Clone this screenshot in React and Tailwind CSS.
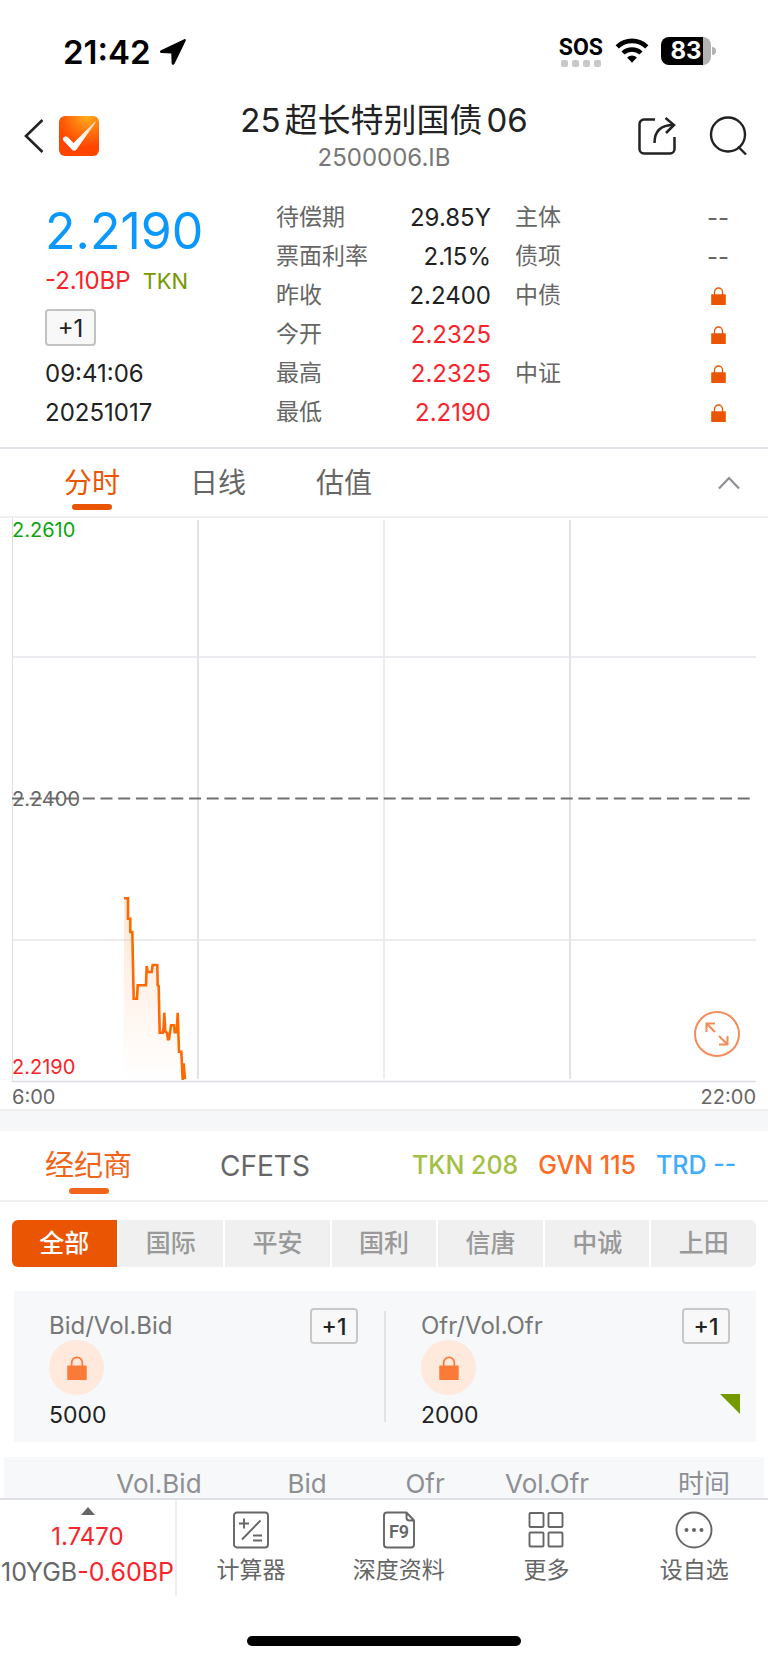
import { useState } from 'react';

const quoteRows = [
  { label: '待偿期', value: '29.85Y', side: '主体', locked: false },
  { label: '票面利率', value: '2.15%', side: '债项', locked: false },
  { label: '昨收', value: '2.2400', side: '中债', locked: true },
  { label: '今开', value: '2.2325', red: true, side: '', locked: true },
  { label: '最高', value: '2.2325', red: true, side: '中证', locked: true },
  { label: '最低', value: '2.2190', red: true, side: '', locked: true }
];

const chartTabs = ['分时', '日线', '估值'];
const brokers = ['全部', '国际', '平安', '国利', '信唐', '中诚', '上田'];

const linePath =
  'M112 380.3H116V400.7H118.3V414H120.3L121.7 480.7H125L125.7 467.3H134L134.7 448L135.7 454H139.7L140.7 447H145.3L145.7 467.3L146.7 468L147.7 514.7H150.7L151.7 508.7L152.3 494.7L153.3 513.7L155 514.7L156 521.3H157L159 507.3H162L162.7 514.3H164.7L165.7 494.7L167 533.7H169.3L170.7 562L171.7 545.3L173 561';

const LockIcon = ({ className }) => (
  <svg viewBox="0 0 15 18" className={className} fill="none" aria-hidden="true">
    <path d="M3.5 8V5a4 4 0 0 1 8 0v3" stroke="currentColor" strokeWidth="1.3" />
    <path d="M.8 7.2h13.4a.6.6 0 0 1 .6.6v9.600a.6.6 0 0 1-.6.6H.8a.6.6 0 0 1-.6-.6V7.800a.6.6 0 0 1 .6-.6z" fill="currentColor" />
  </svg>
);

const StatusBar = () => (
  <div className="flex items-start justify-between pt-9 pl-[63px] pr-[52px] h-[92px] text-black">
    <div className="flex items-center gap-2">
      <span className="text-[33px] leading-8 font-semibold">21:42</span>
      <svg width="28" height="28" viewBox="0 0 28 28" aria-hidden="true">
        <path d="M25.2 1.2 2 12.2c-1.6.8-1.2 2.8.6 2.9l9.7.3.3 9.8c.1 1.8 2.2 2.2 2.9.6L26.7 2.8c.5-1.2-.4-2.1-1.500-1.600z" />
      </svg>
    </div>
    <div className="flex items-start gap-3">
      <div className="flex flex-col items-center">
        <span className="text-[23px] leading-6 font-bold font-['Roboto',sans-serif]">SOS</span>
        <div className="flex gap-1 text-[#c8c8c8]">
          <i className="w-[7px] h-[7px] rounded-xs bg-current" />
          <i className="w-[7px] h-[7px] rounded-xs bg-current" />
          <i className="w-[7px] h-[7px] rounded-xs bg-current" />
          <i className="w-[7px] h-[7px] rounded-xs bg-current" />
        </div>
      </div>
      <svg width="34" height="28" viewBox="0 0 34 28" fill="none" aria-label="Wi-Fi">
        <path d="M2.2 10.8a21.5 21.5 0 0 1 29.600 0" stroke="currentColor" strokeWidth="4.6" />
        <path d="M8 17a13.2 13.2 0 0 1 18 0" stroke="currentColor" strokeWidth="4.4" />
        <path d="M17 26.8l-4.9-5.4a7.6 7.6 0 0 1 9.800 0z" fill="currentColor" />
      </svg>
      <div className="flex items-center pt-px">
        <div className="flex items-center justify-center w-[50px] h-7 rounded-lg bg-linear-to-r from-black from-84% to-[#b3b3b3] to-84% text-white text-2xl font-bold">83</div>
        <i className="w-1 h-2 ml-px rounded-r-full bg-[#b3b3b3]" />
      </div>
    </div>
  </div>
);

const Header = () => (
  <header className="relative flex items-center justify-between h-[92px] px-5">
    <div className="flex items-center gap-[11px] pb-1">
      <button type="button" aria-label="返回">
        <svg width="28" height="40" viewBox="0 0 28 40" fill="none" stroke="#222" strokeWidth="2.6">
          <path d="M22.5 4 6 20l16.5 16" />
        </svg>
      </button>
      <svg width="40" height="40" viewBox="0 0 40 40" aria-hidden="true">
        <defs>
          <radialGradient id="logo" cx="0.7" cy="0" r="0.8">
            <stop offset="0" stopColor="#ffb01c" />
            <stop offset="0.6" stopColor="#ff6a0c" />
            <stop offset="1" stopColor="#ff4400" />
          </radialGradient>
          <linearGradient id="tick" x1="0" y1="1" x2="1" y2="0">
            <stop offset="0.4" stopColor="#fff" />
            <stop offset="1" stopColor="#ffd9b8" />
          </linearGradient>
        </defs>
        <rect width="40" height="40" rx="6" fill="url(#logo)" />
        <path d="M4 22c.6-1.5 3.8-2.3 5.2-.6l5.3 5.6L35.5 6c.7-.6 1.3-.1.9.7L17.5 33.5c-1 1.5-3.2 1.6-4.4.2L4.6 24.8c-.7-.8-1-1.8-.6-2.8z" fill="url(#tick)" />
      </svg>
    </div>
    <div className="absolute inset-x-32 top-2 text-center">
      <h1 className="flex justify-center gap-1 text-[33px] leading-10 text-[#222]">
        <span>25</span>
        <span>超长特别国债</span>
        <span>06</span>
      </h1>
      <p className="mt-1 text-[24px] leading-7 text-[#777]">2500006.IB</p>
    </div>
    <div className="flex items-center gap-[30px] pb-1">
      <button type="button" aria-label="分享">
        <svg width="42" height="42" viewBox="0 0 42 42" fill="none" stroke="#222" strokeWidth="2.5">
          <path d="M19 4.5H8A4.5 4.5 0 0 0 3.5 9v25A4.5 4.5 0 0 0 8 38.5h26a4.5 4.5 0 0 0 4.5-4.5V22" />
          <path d="M18.500 28c0-12 6-18 19-18" />
          <path d="M29.5 3 38 10l-8 8" />
        </svg>
      </button>
      <button type="button" aria-label="搜索">
        <svg width="40" height="40" viewBox="0 0 40 40" fill="none" stroke="#222" strokeWidth="2.4">
          <circle cx="20" cy="18.5" r="17" />
          <path d="m30 30.500 8 8" />
        </svg>
      </button>
    </div>
  </header>
);

const Quote = () => (
  <section className="flex pt-[14px] pb-[15px] pl-[45px] pr-6 border-b-2 border-[#e2e2e8] text-[24px] text-[#222]">
    <div className="w-[231px] shrink-0">
      <p className="text-[50px] leading-[66px] text-[#0a98ff]">2.2190</p>
      <p className="flex items-center gap-3 leading-[34px]">
        <span className="text-[#f7242c]">-2.10BP</span>
        <span className="text-[22px] text-[#749a00]">TKN</span>
      </p>
      <button type="button" className="block w-[51px] h-[37px] mt-[11px] mb-2 border-2 border-[#c2c2c2] rounded-sm bg-[#f8f8f8]">+1</button>
      <p className="leading-[39px]">09:41:06</p>
      <p className="leading-[39px]">20251017</p>
    </div>
    <div className="flex-1">
      {quoteRows.map((row) => (
        <div key={row.label} className="flex items-center h-[39px]">
          <span className="w-24 text-[23px] text-[#666]">{row.label}</span>
          <span className={row.red ? 'flex-1 text-right text-[#f7242c]' : 'flex-1 text-right'}>{row.value}</span>
          <span className="w-[201px] pl-6 text-[23px] text-[#666]">{row.side}</span>
          <span className="flex justify-center w-[52px] text-[#666]">
            {row.locked ? <LockIcon className="w-[15px] h-[18px] text-[#ea5504]" /> : '--'}
          </span>
        </div>
      ))}
    </div>
  </section>
);

const Chart = () => (
  <section className="px-3 text-[20px] leading-6 text-[#666]">
    <div className="relative">
      <svg viewBox="0 0 744 565" className="block w-full" fill="none">
        <defs>
          <linearGradient id="area" x1="0" y1="0" x2="0" y2="1">
            <stop offset="0" stopColor="#ff6a00" stopOpacity="0.16" />
            <stop offset="1" stopColor="#ff6a00" stopOpacity="0" />
          </linearGradient>
        </defs>
        <path d="M0 139H744M0 422H744M372 2V561" stroke="#ececf0" strokeWidth="1.8" />
        <path d="M.5 0V564" stroke="#e0e0e4" />
        <path d="M186 2V561M558 2V561" stroke="#e1e4ec" strokeWidth="2" />
        <path d="M0 563.5H744" stroke="#dcdce2" strokeWidth="1.6" />
        <path d="M0 280.5H740" stroke="#707070" strokeWidth="2" strokeDasharray="12 5.7" />
        <path d={linePath + 'V563H112Z'} fill="url(#area)" />
        <path d={linePath} stroke="#ff6a00" strokeWidth="2.6" />
      </svg>
      <span className="absolute left-0 top-0 text-[#0da50d]">2.2610</span>
      <span className="absolute left-0 top-[calc(50%-14px)]">2.2400</span>
      <span className="absolute left-0 bottom-1 text-[#f7242c]">2.2190</span>
      <button type="button" aria-label="全屏" className="absolute right-4 bottom-[26px]">
        <svg width="46" height="46" viewBox="0 0 46 46" fill="none" stroke="#f58b58" strokeWidth="2">
          <circle cx="23" cy="23" r="22" />
          <path d="M12.5 21V12.5H21M12.5 12.5l8.500 8.500M25 25l8.500 8.500M33.5 25v8.500H25" />
        </svg>
      </button>
    </div>
    <div className="flex justify-between pt-0.5">
      <span>6:00</span>
      <span>22:00</span>
    </div>
  </section>
);

const SidePanel = ({ title, volume, flagged }) => (
  <div className="relative flex-1 pt-[17px] pb-[11px] pl-[35px] pr-[26px]">
    <div className="flex items-center justify-between h-9">
      <span className="text-[#777]">{title}</span>
      <button type="button" className="w-12 h-9 border-2 border-[#c8c8c8] rounded-sm bg-[#f8f8f8] text-[23px] font-medium">+1</button>
    </div>
    <div className="flex items-center justify-center w-[55px] h-[55px] -mt-1 rounded-full bg-[#ffe8dc]">
      <LockIcon className="w-5 h-6 text-[#fa7b38]" />
    </div>
    <p className="mt-1 text-[23px] leading-8">{volume}</p>
    {flagged && (
      <svg width="20" height="20" viewBox="0 0 20 20" className="absolute right-4 bottom-7" aria-hidden="true">
        <path d="M0 0H20V20z" fill="#749a00" />
      </svg>
    )}
  </div>
);

const NavButton = ({ label, children }) => (
  <button type="button" className="flex flex-col items-center flex-1 pt-[11px] text-[#666]">
    <svg width="38" height="38" viewBox="0 0 38 38" fill="none" stroke="currentColor" strokeWidth="1.9" aria-hidden="true">
      {children}
    </svg>
    <span className="mt-[3px] text-[23px] leading-9">{label}</span>
  </button>
);

const BottomNav = () => (
  <nav className="flex border-t-2 border-[#dfe0e6]">
    <div className="flex flex-col items-center w-[177px] h-24 pt-[7px] border-r-2 border-[#efefef] text-[24px] text-[#f7242c]">
      <svg width="14" height="8" viewBox="0 0 14 8" aria-hidden="true">
        <path d="M7 0 14 8H0z" fill="#666" />
      </svg>
      <span className="mt-[5px] leading-[34px]">1.7470</span>
      <span className="text-[25px] leading-9 whitespace-nowrap">
        <span className="text-[#666]">10YGB</span>-0.60BP
      </span>
    </div>
    <NavButton label="计算器">
      <rect x="2" y="1.5" width="34" height="35" rx="3" />
      <path d="M12 7.5v10M7 12.5h10M28.5 9.5 10 28.5M21 24.5h9M21 29.5h9" />
    </NavButton>
    <NavButton label="深度资料">
      <path d="M26.5 1.5H7A3 3 0 0 0 4 4.5v29a3 3 0 0 0 3 3h24a3 3 0 0 0 3-3V9.500zM26.5 1.5v5a3 3 0 0 0 3 3H34" />
      <text x="19" y="27" textAnchor="middle" fill="currentColor" stroke="none" className="text-[18px] font-semibold font-['Roboto',sans-serif]">F9</text>
    </NavButton>
    <NavButton label="更多">
      <rect x="2.5" y="2" width="14" height="14" rx="1" />
      <rect x="21.5" y="2" width="14" height="14" rx="1" />
      <rect x="2.5" y="21.5" width="14" height="14" rx="1" />
      <rect x="21.5" y="21.5" width="14" height="14" rx="1" />
    </NavButton>
    <NavButton label="设自选">
      <circle cx="19" cy="19" r="17.5" />
      <g fill="currentColor" stroke="none">
        <circle cx="11.5" cy="19" r="2" />
        <circle cx="19" cy="19" r="2" />
        <circle cx="26.5" cy="19" r="2" />
      </g>
    </NavButton>
  </nav>
);

const App = () => {
  const [chartTab, setChartTab] = useState('分时');
  const [broker, setBroker] = useState('全部');

  return (
    <div className="min-h-screen bg-white font-['Inter','Noto_Sans_CJK_SC',sans-serif] text-[#222]">
      <StatusBar />
      <Header />
      <Quote />

      <div className="flex items-center justify-between h-[69px] pl-16 pr-6 border-b-2 border-[#f0f0f0]">
        <div className="flex gap-[70px]">
          {chartTabs.map((tab) => (
            <button
              key={tab}
              type="button"
              onClick={() => setChartTab(tab)}
              className={
                tab === chartTab
                  ? 'relative h-[67px] text-[28px] text-[#ea5504]'
                  : 'relative h-[67px] text-[28px] text-[#666]'
              }
            >
              {tab}
              {tab === chartTab && (
                <i className="absolute bottom-1.5 left-1/2 w-10 h-1.5 -translate-x-1/2 rounded-full bg-[#ea5504]" />
              )}
            </button>
          ))}
        </div>
        <button type="button" aria-label="收起">
          <svg width="30" height="20" viewBox="0 0 30 20" fill="none" stroke="#8e8e93" strokeWidth="2.2">
            <path d="M5 15.5 15 5l10 10.500" />
          </svg>
        </button>
      </div>

      <Chart />

      <div className="h-[22px] border-t-2 border-[#eeeeef] bg-[#f6f7f9]" />

      <div className="flex items-center justify-between h-[71px] pl-[45px] pr-5 border-b-2 border-[#f0f0f0] text-[29px]">
        <div className="flex gap-[88px]">
          <button type="button" className="relative h-[69px] text-[#f0641c]">
            经纪商
            <i className="absolute bottom-1.5 left-1/2 w-10 h-1.5 -translate-x-1/2 rounded-full bg-[#f0641c]" />
          </button>
          <button type="button" className="h-[69px] text-[28px] text-[#666]">CFETS</button>
        </div>
        <div className="flex gap-5 text-[25px] font-medium">
          <span className="text-[#a3bf45]">TKN 208</span>
          <span className="text-[#ff6a22]">GVN 115</span>
          <span className="w-[92px] text-[#3fadff]">TRD --</span>
        </div>
      </div>

      <div className="flex gap-0.5 mx-3 mt-[18px] rounded-md overflow-hidden">
        {brokers.map((name) => (
          <button
            key={name}
            type="button"
            onClick={() => setBroker(name)}
            className={
              name === broker
                ? 'flex-1 h-[47px] text-[25px] font-medium bg-[#ea5504] text-white'
                : 'flex-1 h-[47px] text-[25px] font-medium bg-[#f0f0f0] text-[#999]'
            }
          >
            {name}
          </button>
        ))}
      </div>

      <section className="flex ml-[14px] mr-3 mt-6 bg-[#f6f8fa] text-[24px]">
        <SidePanel title="Bid/Vol.Bid" volume="5000" />
        <i className="w-0.5 my-5 bg-[#e2e3e6]" />
        <SidePanel title="Ofr/Vol.Ofr" volume="2000" flagged />
      </section>

      <div className="mx-1 mt-[15px] bg-[#f6f8fa]">
        <table className="w-full table-fixed text-[26px] leading-7 text-[#8e8e93]">
          <thead>
            <tr className="text-right">
              <th className="w-[26%] pt-[13px] font-normal">Vol.Bid</th>
              <th className="w-[17%] pt-[13px] pr-1 font-normal">Bid</th>
              <th className="w-[15%] pt-[13px] font-normal">Ofr</th>
              <th className="w-[19%] pt-[13px] font-normal">Vol.Ofr</th>
              <th className="pt-[13px] pr-[34px] font-normal">时间</th>
            </tr>
          </thead>
        </table>
      </div>

      <BottomNav />

      <div className="flex justify-center pt-10 pb-3">
        <i className="w-[274px] h-2.5 rounded-full bg-black" />
      </div>
    </div>
  );
};

export default App;
